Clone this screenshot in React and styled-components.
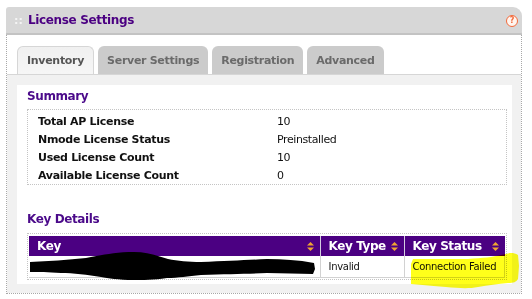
import React from "react";
import styled, { createGlobalStyle, css } from "styled-components";

const GlobalStyle = createGlobalStyle`
  html, body { margin: 0; padding: 0; background: #ffffff; }
  body { font-family: "DejaVu Sans", Verdana, Tahoma, sans-serif; }
  * { box-sizing: border-box; }
`;

const Page = styled.div`
  width: 532px;
  height: 299px;
  padding: 7px 10px 0 6px;
  overflow: hidden;
`;

const Panel = styled.div`
  width: 516px;
`;

const Header = styled.div`
  height: 28px;
  background: #d7d7d7;
  border-bottom: 2px solid #c3c3c3;
  border-radius: 3px 9px 0 0;
  display: flex;
  align-items: center;
  padding: 0 4px 0 8px;
`;

const Grip = styled.span`
  color: #f4f4f4;
  font-weight: bold;
  font-size: 11px;
  width: 14px;
  letter-spacing: 0;
`;

const Title = styled.h1`
  margin: 0;
  flex: 1;
  font-size: 12px;
  font-weight: bold;
  letter-spacing: -0.35px;
  color: #4b0082;
  line-height: 16px;
  margin-top: -1px;
`;

const Help = styled.span`
  width: 12px;
  height: 12px;
  border-radius: 50%;
  border: 1.5px solid #f26a3c;
  background: #fff6f0;
  color: #f26a3c;
  font-size: 8px;
  font-weight: bold;
  display: flex;
  align-items: center;
  justify-content: center;
  line-height: 1;
  margin-top: 1px;
`;

const Body = styled.div`
  border-left: 1px dotted #a8a8a8;
  border-right: 1px dotted #a8a8a8;
  border-bottom: 1px dotted #a8a8a8;
  background: #ffffff;
  padding-top: 11px;
`;

const TabBar = styled.div`
  display: flex;
  gap: 4px;
  padding-left: 10px;
  height: 28px;
`;

const Tab = styled.div`
  height: 28px;
  padding: 0 9px;
  border-radius: 6px 6px 0 0;
  display: flex;
  align-items: center;
  font-size: 11px;
  font-weight: bold;
  letter-spacing: -0.3px;
  color: #6a6a6a;
  background: #cbcbcb;
  ${(p) =>
    p.$active &&
    css`
      background: linear-gradient(#f0f0f0, #f6f6f6);
      border: 1px solid #d6d6d6;
      border-bottom: none;
      color: #555555;
    `}
`;

const TabContent = styled.div`
  border-top: 1px solid #d6d6d6;
  background: #f1f1f1;
  padding: 10px 9px 9px 10px;
`;

const Card = styled.div`
  background: #ffffff;
  padding: 3px 5px 4px 10px;
`;

const SectionTitle = styled.h2`
  margin: 0;
  font-size: 12px;
  font-weight: bold;
  letter-spacing: -0.4px;
  line-height: 16px;
  color: #4b0a8a;
  margin-top: ${(p) => p.$top || 0}px;
  margin-bottom: ${(p) => p.$bottom || 0}px;
`;

const SummaryBox = styled.div`
  border: 1px dotted #c4c4c4;
  padding: 2px 0 0 10px;
`;

const SummaryRow = styled.div`
  display: grid;
  grid-template-columns: 239px 1fr;
  height: 18px;
  align-items: center;
`;

const Label = styled.span`
  font-size: 11px;
  font-weight: bold;
  letter-spacing: -0.3px;
  color: #111111;
`;

const Value = styled.span`
  font-size: 11px;
  letter-spacing: -0.4px;
  color: #111111;
`;

const KeyWrap = styled.div`
  position: relative;
  border: 1px dotted #c4c4c4;
  padding: 2px 1px 1px 1px;
`;

const Table = styled.table`
  width: 100%;
  border-collapse: collapse;
  table-layout: fixed;
`;

const Th = styled.th`
  background: #4b0082;
  color: #ffffff;
  height: 20px;
  padding: 0 6px 0 8px;
  text-align: left;
  font-size: 12px;
  font-weight: bold;
  letter-spacing: -0.4px;
  border-left: 1px solid #d4cce0;
  &:first-child { border-left: none; }
`;

const ThInner = styled.div`
  display: flex;
  align-items: center;
  justify-content: space-between;
`;

const Td = styled.td`
  height: 21px;
  padding: 0 7px 0 8px;
  font-size: 10px;
  letter-spacing: -0.3px;
  color: #111111;
  border: 1px solid #d2d2d2;
  border-top: none;
  &:first-child { border-left: none; }
`;

const Overlay = styled.svg`
  position: absolute;
  left: 0;
  top: 0;
  overflow: visible;
  pointer-events: none;
`;

const SortIcon = () => (
  <svg width="7" height="9" viewBox="0 0 7 9">
    <path d="M3.5 0 L7 3.5 L0 3.5 Z" fill="#f0a431" />
    <path d="M0 5.5 L7 5.5 L3.5 9 Z" fill="#f0a431" />
  </svg>
);

const summary = [
  ["Total AP License", "10"],
  ["Nmode License Status", "Preinstalled"],
  ["Used License Count", "10"],
  ["Available License Count", "0"],
];

const tabs = ["Inventory", "Server Settings", "Registration", "Advanced"];

export default function App() {
  return (
    <>
      <GlobalStyle />
      <Page>
        <Panel>
          <Header>
            <Grip>::</Grip>
            <Title>License Settings</Title>
            <Help>?</Help>
          </Header>
          <Body>
            <TabBar>
              {tabs.map((t, i) => (
                <Tab key={t} $active={i === 0}>
                  {t}
                </Tab>
              ))}
            </TabBar>
            <TabContent>
              <Card>
                <SectionTitle $bottom={5}>Summary</SectionTitle>
                <SummaryBox>
                  {summary.map(([l, v]) => (
                    <SummaryRow key={l}>
                      <Label>{l}</Label>
                      <Value>{v}</Value>
                    </SummaryRow>
                  ))}
                </SummaryBox>
                <SectionTitle $top={26} $bottom={6}>
                  Key Details
                </SectionTitle>
                <KeyWrap>
                  <Table>
                    <colgroup>
                      <col style={{ width: 291 }} />
                      <col style={{ width: 84 }} />
                      <col />
                    </colgroup>
                    <thead>
                      <tr>
                        <Th>
                          <ThInner>
                            Key <SortIcon />
                          </ThInner>
                        </Th>
                        <Th>
                          <ThInner>
                            Key Type <SortIcon />
                          </ThInner>
                        </Th>
                        <Th>
                          <ThInner>
                            Key Status <SortIcon />
                          </ThInner>
                        </Th>
                      </tr>
                    </thead>
                    <tbody>
                      <tr>
                        <Td></Td>
                        <Td>Invalid</Td>
                        <Td>Connection Failed</Td>
                      </tr>
                    </tbody>
                  </Table>
                  <Overlay width="480" height="60" viewBox="0 0 480 60">
                    <path
                      d="M2 28 C20 27 40 26 58 24 C70 22 85 18 106 18 C120 18 130 22 140 25 C150 27 160 28 173 28 C200 27 220 26 239 25 C255 25 270 26 286 29 L287 35 L285 40 C270 40 255 39 239 39 C220 40 200 40 173 41 C160 42 150 44 139 44 C125 46 115 46 106 46 C90 46 80 44 73 43 C60 41 45 39 33 39 C20 38 10 38 2 38 Z"
                      fill="#000000"
                    />
                    <path
                      d="M383 30 L385 25 C400 25 420 25 440 25 C455 24 465 23 473 21 C480 19 485 18 490 21 L491 32 L490 45 C488 48 486 49 480 49 C470 50 460 51 450 53 C440 55 430 54 418 53 C405 52 395 51 383 50 Z"
                      fill="#ffff1a"
                      style={{ mixBlendMode: "multiply" }}
                    />
                  </Overlay>
                </KeyWrap>
              </Card>
            </TabContent>
          </Body>
        </Panel>
      </Page>
    </>
  );
}
